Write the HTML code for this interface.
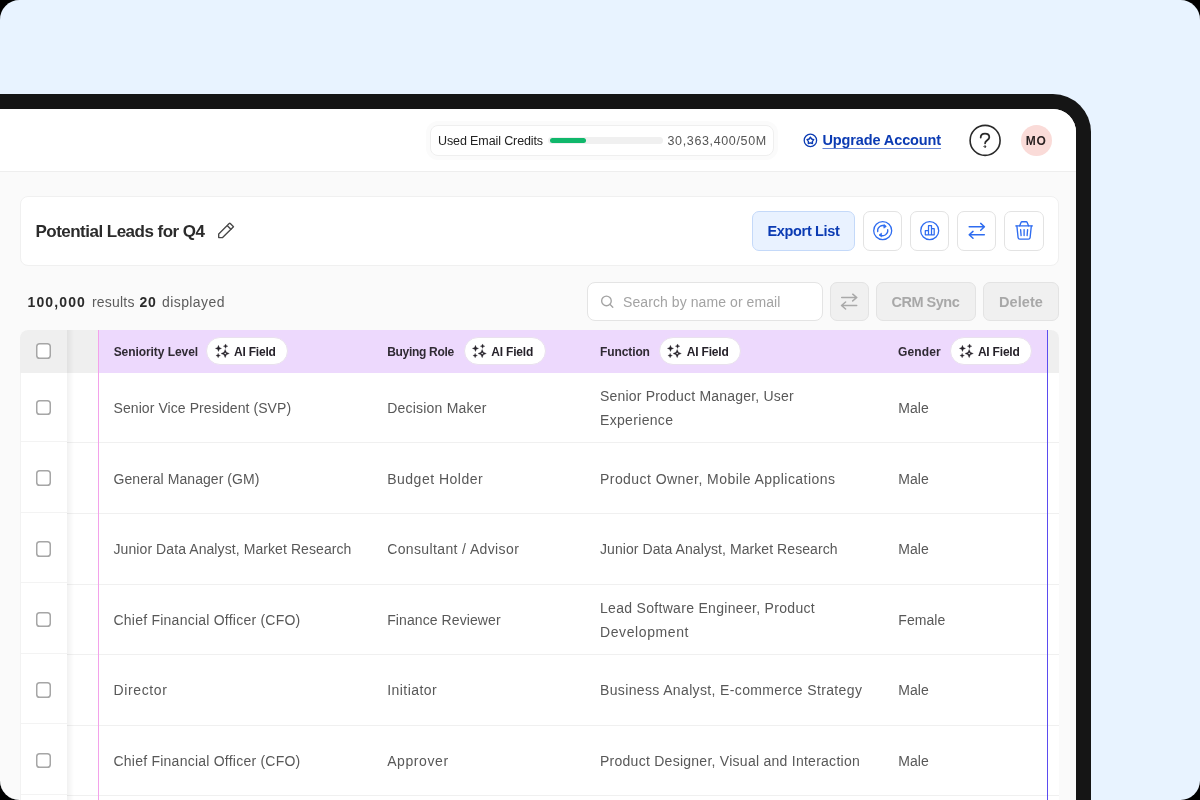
<!DOCTYPE html>
<html>
<head>
<meta charset="utf-8">
<title>Leads</title>
<style>
*{box-sizing:border-box;margin:0;padding:0}
html,body{width:1200px;height:800px;overflow:hidden;background:#000;font-family:"Liberation Sans",sans-serif;}
.canvas{will-change:transform;position:absolute;left:0;top:0;width:1200px;height:800px;background:#e8f3ff;border-radius:19.5px;overflow:hidden}
.frame{position:absolute;left:-60px;top:94px;width:1151px;height:800px;background:#151515;border-radius:38px}
.screen{position:absolute;left:0;top:109px;width:1076px;height:700px;background:#fafafa;border-top-right-radius:23px;overflow:hidden}
.abs{position:absolute}
.t{position:absolute;white-space:nowrap;line-height:1}
.b{font-weight:700}
/* header */
.hdr{position:absolute;left:0;top:0;width:1076px;height:62.5px;background:#fff;border-bottom:1px solid #eeeeee}
.credits{position:absolute;left:430px;top:16px;width:344px;height:30.6px;border:1px solid #efefef;border-radius:8px;background:#fff;box-shadow:0 0 0 4px #fbfbfb}
.bar{position:absolute;left:548px;top:27.7px;width:115.2px;height:7.5px;border-radius:4px;background:#f0f0f0}
.bar i{position:absolute;left:1.6px;top:1.5px;width:36.6px;height:4.5px;border-radius:2.5px;background:#10b76b}
.help{position:absolute;left:969.5px;top:16px;width:31px;height:31px;border-radius:50%;border:1.6px solid #242424}
.avatar{position:absolute;left:1020.5px;top:16px;width:31px;height:31px;border-radius:50%;background:#fadbd8}
/* cards */
.card{position:absolute;left:20px;top:87px;width:1039px;height:69.5px;background:#fff;border:1px solid #f0f0f0;border-radius:8px}
.btn{position:absolute;height:39px;border-radius:7px}
.ibtn{width:39.3px;height:39.5px;background:#fff;border:1px solid #e3e3e3}
.gbtn{background:#f0f0f0;border:1px solid #e3e3e3}
.btn svg{position:absolute;left:0;top:0}
.search{position:absolute;left:587px;top:173px;width:236px;height:39px;background:#fff;border:1px solid #e4e4e4;border-radius:8px}
/* table */
.table{position:absolute;left:20px;top:221px;width:1039px;height:500px;border-top-left-radius:8px;border-top-right-radius:8px;overflow:hidden;background:#fff}
.th{position:absolute;left:0;top:0;width:1039px;height:43px;background:#efefef}
.thp{position:absolute;left:79px;top:0;width:948px;height:43px;background:#edd9fd}
.row{position:absolute;left:0;width:1039px;height:70.67px;border-bottom:1px solid #f0f0f0}
.cb{position:absolute;left:15.6px;width:15.5px;height:15.5px;border-radius:3.6px;background:#fff;box-shadow:inset 0 0 0 1.5px #a6a6a6}
.pill{position:absolute;top:7px;height:28px;width:82px;border-radius:14px;background:#fff;border:1px solid #e9e1ee}
.hl{position:absolute;top:14.7px;font-size:12px;font-weight:700;color:#2f2a33;white-space:nowrap;line-height:15px}
.pill span{position:absolute;left:26.6px;top:7.2px;font-size:12px;font-weight:700;color:#26222a;white-space:nowrap;line-height:15px;letter-spacing:-0.2px}
.pill svg{position:absolute;left:6.3px;top:4.8px}
.c{position:absolute;font-size:14px;color:#585858;white-space:nowrap;line-height:24px}
.cs{position:absolute;left:0;bottom:-1px;width:46.6px;height:2.4px;background:#fff;border-top:1px solid #f3f3f3}
.tl{position:absolute;left:0;top:43px;width:1px;height:500px;background:#f2f2f2}
.stick{position:absolute;left:46.6px;top:0;width:32px;height:500px;background:linear-gradient(90deg,rgba(0,0,0,.055),rgba(0,0,0,0) 7px)}
.lline{position:absolute;left:78px;top:0;width:1px;height:500px;background:#f3a2ea}
.rline{position:absolute;left:1027px;top:0;width:1px;height:500px;background:#5b4cf0}
</style>
</head>
<body>
<div class="canvas">
  <div class="frame"></div>
  <div class="screen">
    <div class="hdr"></div>
    <div class="credits"></div>
    <div class="t" style="left:438px;top:26.3px;font-size:12.5px;color:#222;letter-spacing:-0.11px">Used Email Credits</div>
    <div class="bar"><i></i></div>
    <div class="t" style="left:667.5px;top:26.3px;font-size:12.5px;color:#555;letter-spacing:0.64px">30,363,400/50M</div>
    <div class="t b" style="left:822.5px;top:24.1px;font-size:14.5px;color:#0b3bb3;letter-spacing:-0.12px;text-decoration:underline;text-decoration-thickness:1px;text-underline-offset:3.2px;text-decoration-color:#6685d6">Upgrade Account</div>
    <div class="avatar"></div>
    <div class="t b" style="left:1025.8px;top:26.4px;font-size:12px;color:#2a2222;letter-spacing:0.7px">MO</div>

    <div class="card"></div>
    <div class="t b" style="left:35.5px;top:113.7px;font-size:17px;color:#2b2b2b;letter-spacing:-0.52px">Potential Leads for Q4</div>

    <div class="btn" style="left:752px;top:102px;height:39.5px;width:103px;background:#e9f2ff;border:1px solid #c4d9f9"></div>
    <div class="t b" style="left:767.5px;top:114.5px;font-size:14.5px;color:#0b3bb3;letter-spacing:-0.34px">Export List</div>
    <div class="btn ibtn" style="left:863px;top:102px"></div>
    <div class="btn ibtn" style="left:910.1px;top:102px"></div>
    <div class="btn ibtn" style="left:957.2px;top:102px"></div>
    <div class="btn ibtn" style="left:1004.3px;top:102px"></div>

    <div class="t" style="left:27.5px;top:185.7px;font-size:14px;color:#555"><span class="b" style="color:#2b2b2b;letter-spacing:1.13px">100,000</span></div>
    <div class="t" style="left:92px;top:185.7px;font-size:14px;color:#5c5c5c;letter-spacing:.2px">results</div>
    <div class="t b" style="left:139.5px;top:185.7px;font-size:14px;color:#2b2b2b;letter-spacing:.66px">20</div>
    <div class="t" style="left:162px;top:185.7px;font-size:14px;color:#5c5c5c;letter-spacing:.41px">displayed</div>

    <div class="search"></div>
    <div class="t" style="left:623px;top:185.5px;font-size:14px;color:#a3a3a3;letter-spacing:.08px">Search by name or email</div>
    <div class="btn gbtn" style="left:830px;top:173px;width:39px"></div>
    <div class="btn gbtn" style="left:876px;top:173px;width:100px"></div>
    <div class="t b" style="left:891.5px;top:185.7px;font-size:14.5px;color:#a8a8a8;letter-spacing:-0.5px">CRM Sync</div>
    <div class="btn gbtn" style="left:983px;top:173px;width:76px"></div>
    <div class="t b" style="left:999px;top:185.7px;font-size:14.5px;color:#a8a8a8;letter-spacing:.08px">Delete</div>

<svg class="abs" style="left:0;top:-109px" width="1200" height="800" viewBox="0 0 1200 800" fill="none" stroke-linecap="round" stroke-linejoin="round">
  <!-- upgrade icon -->
  <g stroke="#0b3bb3" stroke-width="1.3">
    <circle cx="810.4" cy="140.4" r="6.2"/>
    <path d="M810.40 137.20 L811.63 139.00 L813.73 139.62 L812.40 141.35 L812.46 143.53 L810.40 142.80 L808.34 143.53 L808.40 141.35 L807.07 139.62 L809.17 139.00Z" stroke-width="1.4"/>
  </g>
  <!-- help -->
  <g stroke="#2a2a2a" stroke-width="1.6">
    <circle cx="985.1" cy="140.4" r="15"/>
    <path d="M980.7 137.6 C980.7 135 982.6 133.7 985 133.7 C987.6 133.7 989.3 135.2 989.3 137.2 C989.3 140.2 985.1 140.3 985.1 143.3" stroke-width="1.8"/>
    <path d="M985.1 145.8 L986 146.7 L985.1 147.6 L984.2 146.7Z" fill="#2a2a2a" stroke-width="1"/>
  </g>
  <!-- pencil -->
  <g stroke="#484848" stroke-width="1.35">
    <path d="M230.3 223.5 L233.5 226.7 L222.6 237.6 L218.7 237.6 L218.7 233.9 L229.2 223.5 Q229.75 223 230.3 223.5Z"/>
    <path d="M227.6 225.9 L230.9 229.2"/>
  </g>
  <!-- toolbar icons -->
  <g stroke="#2e6cf0" stroke-width="1.3">
    <circle cx="882.7" cy="230.65" r="9"/>
    <path d="M877.7 231.6 A5.1 5.1 0 0 1 885.3 226.3"/>
    <path d="M884.2 224.7 L886.3 226.4 L884.2 227.9Z" fill="#2e6cf0" stroke-width=".8"/>
    <path d="M887.7 229.7 A5.1 5.1 0 0 1 880.1 235"/>
    <path d="M881.2 233.4 L879.1 235 L881.2 236.6Z" fill="#2e6cf0" stroke-width=".8"/>
    <circle cx="929.7" cy="230.65" r="9"/>
    <path d="M925.3 234.8 V230.5 H928.5 V225.7 H931.5 V228.7 H934.2 V234.8 Z M928.5 230.5 V234.8 M931.5 228.7 V234.8" stroke-width="1.25"/>
  </g>
  <g stroke="#2e6cf0" stroke-width="1.5">
    <path d="M969.2 226.8 H984.3 M980.7 223.4 L984.4 226.8 L980.7 230.2"/>
    <path d="M984.3 234.8 H969.3 M973 231.4 L969.2 234.8 L973 238.3"/>
  </g>
  <g stroke="#2e6cf0" stroke-width="1.35">
    <path d="M1015.8 225.9 H1032.4"/>
    <path d="M1019.6 225.9 L1021 222.4 Q1021.3 221.7 1022 221.7 H1026.2 Q1026.9 221.7 1027.2 222.4 L1028.6 225.9"/>
    <path d="M1016.9 226.1 L1018.1 237.6 Q1018.3 239.1 1019.8 239.1 H1028.4 Q1029.9 239.1 1030.1 237.6 L1031.3 226.1"/>
    <path d="M1020.6 229.6 L1021.1 235.6 M1024.1 229.6 V235.6 M1027.6 229.6 L1027.1 235.6"/>
  </g>
  <!-- search -->
  <g stroke="#a3a3a3" stroke-width="1.35">
    <circle cx="606.45" cy="300.9" r="4.8"/>
    <path d="M610.1 304.5 L612.8 307.2"/>
  </g>
  <!-- gray swap -->
  <g stroke="#a9a9a9" stroke-width="1.5">
    <path d="M841.7 297.5 H856.7 M852.7 294.2 L856.8 297.5 L852.7 300.9"/>
    <path d="M856.7 305.45 H841.7 M845.6 302 L841.5 305.45 L845.6 309"/>
  </g>
</svg>
    <div class="table" id="table">
<div class="row" style="top:42.70px"><div class="cb" style="top:27.2px"></div><div class="cs"></div>
<div class="c" style="left:93.5px;top:23.3px;letter-spacing:0.077px">Senior Vice President (SVP)</div>
<div class="c" style="left:367.2px;top:23.3px;letter-spacing:0.208px">Decision Maker</div>
<div class="c" style="left:580px;top:11.3px;letter-spacing:0.194px">Senior Product Manager, User</div>
<div class="c" style="left:580px;top:35.3px;letter-spacing:0.325px">Experience</div>
<div class="c" style="left:878.3px;top:23.3px;letter-spacing:0.010px">Male</div>
</div>
<div class="row" style="top:113.30px"><div class="cb" style="top:27.2px"></div><div class="cs"></div>
<div class="c" style="left:93.5px;top:23.3px;letter-spacing:0.064px">General Manager (GM)</div>
<div class="c" style="left:367.2px;top:23.3px;letter-spacing:0.499px">Budget Holder</div>
<div class="c" style="left:580px;top:23.3px;letter-spacing:0.446px">Product Owner, Mobile Applications</div>
<div class="c" style="left:878.3px;top:23.3px;letter-spacing:0.010px">Male</div>
</div>
<div class="row" style="top:183.90px"><div class="cb" style="top:27.2px"></div><div class="cs"></div>
<div class="c" style="left:93.5px;top:23.3px;letter-spacing:0.083px">Junior Data Analyst, Market Research</div>
<div class="c" style="left:367.2px;top:23.3px;letter-spacing:0.374px">Consultant / Advisor</div>
<div class="c" style="left:580px;top:23.3px;letter-spacing:0.072px">Junior Data Analyst, Market Research</div>
<div class="c" style="left:878.3px;top:23.3px;letter-spacing:0.010px">Male</div>
</div>
<div class="row" style="top:254.50px"><div class="cb" style="top:27.2px"></div><div class="cs"></div>
<div class="c" style="left:93.5px;top:23.3px;letter-spacing:0.233px">Chief Financial Officer (CFO)</div>
<div class="c" style="left:367.2px;top:23.3px;letter-spacing:0.090px">Finance Reviewer</div>
<div class="c" style="left:580px;top:11.3px;letter-spacing:0.307px">Lead Software Engineer, Product</div>
<div class="c" style="left:580px;top:35.3px;letter-spacing:0.591px">Development</div>
<div class="c" style="left:878.3px;top:23.3px;letter-spacing:0.052px">Female</div>
</div>
<div class="row" style="top:325.10px"><div class="cb" style="top:27.2px"></div><div class="cs"></div>
<div class="c" style="left:93.5px;top:23.3px;letter-spacing:0.623px">Director</div>
<div class="c" style="left:367.2px;top:23.3px;letter-spacing:0.453px">Initiator</div>
<div class="c" style="left:580px;top:23.3px;letter-spacing:0.359px">Business Analyst, E-commerce Strategy</div>
<div class="c" style="left:878.3px;top:23.3px;letter-spacing:0.010px">Male</div>
</div>
<div class="row" style="top:395.70px"><div class="cb" style="top:27.2px"></div><div class="cs"></div>
<div class="c" style="left:93.5px;top:23.3px;letter-spacing:0.233px">Chief Financial Officer (CFO)</div>
<div class="c" style="left:367.2px;top:23.3px;letter-spacing:0.586px">Approver</div>
<div class="c" style="left:580px;top:23.3px;letter-spacing:0.261px">Product Designer, Visual and Interaction</div>
<div class="c" style="left:878.3px;top:23.3px;letter-spacing:0.010px">Male</div>
</div>
<div class="th"></div>
      <div class="thp"></div>
      <div class="cb" style="top:13px"></div>
      <div class="hl" style="left:93.7px;letter-spacing:-0.07px">Seniority Level</div><div class="pill" style="left:186.4px"><svg width="17" height="17" viewBox="0 0 16 16" fill="#26222a" stroke="#26222a" stroke-width=".3" stroke-linejoin="round"><path d="M4.2 2.2 L5.05 4.25 L7.1 5.1 L5.05 5.95 L4.2 8 L3.35 5.95 L1.3 5.1 L3.35 4.25Z"/><path d="M10.9 0.9 L11.5 2.4 L13 3 L11.5 3.6 L10.9 5.1 L10.3 3.6 L8.8 3 L10.3 2.4Z"/><path d="M3.9 9.7 L4.5 11.2 L6 11.8 L4.5 12.4 L3.9 13.9 L3.3 12.4 L1.8 11.8 L3.3 11.2Z"/><path d="M10.5 6 L11.65 8.75 L14.4 9.9 L11.65 11.05 L10.5 13.8 L9.35 11.05 L6.6 9.9 L9.35 8.75Z M10.5 8.7 L10.05 9.45 L9.3 9.9 L10.05 10.35 L10.5 11.1 L10.95 10.35 L11.7 9.9 L10.95 9.45Z" fill-rule="evenodd"/></svg><span>AI Field</span></div>
      <div class="hl" style="left:367.2px;letter-spacing:-0.3px">Buying Role</div><div class="pill" style="left:443.7px"><svg width="17" height="17" viewBox="0 0 16 16" fill="#26222a" stroke="#26222a" stroke-width=".3" stroke-linejoin="round"><path d="M4.2 2.2 L5.05 4.25 L7.1 5.1 L5.05 5.95 L4.2 8 L3.35 5.95 L1.3 5.1 L3.35 4.25Z"/><path d="M10.9 0.9 L11.5 2.4 L13 3 L11.5 3.6 L10.9 5.1 L10.3 3.6 L8.8 3 L10.3 2.4Z"/><path d="M3.9 9.7 L4.5 11.2 L6 11.8 L4.5 12.4 L3.9 13.9 L3.3 12.4 L1.8 11.8 L3.3 11.2Z"/><path d="M10.5 6 L11.65 8.75 L14.4 9.9 L11.65 11.05 L10.5 13.8 L9.35 11.05 L6.6 9.9 L9.35 8.75Z M10.5 8.7 L10.05 9.45 L9.3 9.9 L10.05 10.35 L10.5 11.1 L10.95 10.35 L11.7 9.9 L10.95 9.45Z" fill-rule="evenodd"/></svg><span>AI Field</span></div>
      <div class="hl" style="left:580px;letter-spacing:-0.1px">Function</div><div class="pill" style="left:639.2px"><svg width="17" height="17" viewBox="0 0 16 16" fill="#26222a" stroke="#26222a" stroke-width=".3" stroke-linejoin="round"><path d="M4.2 2.2 L5.05 4.25 L7.1 5.1 L5.05 5.95 L4.2 8 L3.35 5.95 L1.3 5.1 L3.35 4.25Z"/><path d="M10.9 0.9 L11.5 2.4 L13 3 L11.5 3.6 L10.9 5.1 L10.3 3.6 L8.8 3 L10.3 2.4Z"/><path d="M3.9 9.7 L4.5 11.2 L6 11.8 L4.5 12.4 L3.9 13.9 L3.3 12.4 L1.8 11.8 L3.3 11.2Z"/><path d="M10.5 6 L11.65 8.75 L14.4 9.9 L11.65 11.05 L10.5 13.8 L9.35 11.05 L6.6 9.9 L9.35 8.75Z M10.5 8.7 L10.05 9.45 L9.3 9.9 L10.05 10.35 L10.5 11.1 L10.95 10.35 L11.7 9.9 L10.95 9.45Z" fill-rule="evenodd"/></svg><span>AI Field</span></div>
      <div class="hl" style="left:878px;letter-spacing:0.15px">Gender</div><div class="pill" style="left:930.3px"><svg width="17" height="17" viewBox="0 0 16 16" fill="#26222a" stroke="#26222a" stroke-width=".3" stroke-linejoin="round"><path d="M4.2 2.2 L5.05 4.25 L7.1 5.1 L5.05 5.95 L4.2 8 L3.35 5.95 L1.3 5.1 L3.35 4.25Z"/><path d="M10.9 0.9 L11.5 2.4 L13 3 L11.5 3.6 L10.9 5.1 L10.3 3.6 L8.8 3 L10.3 2.4Z"/><path d="M3.9 9.7 L4.5 11.2 L6 11.8 L4.5 12.4 L3.9 13.9 L3.3 12.4 L1.8 11.8 L3.3 11.2Z"/><path d="M10.5 6 L11.65 8.75 L14.4 9.9 L11.65 11.05 L10.5 13.8 L9.35 11.05 L6.6 9.9 L9.35 8.75Z M10.5 8.7 L10.05 9.45 L9.3 9.9 L10.05 10.35 L10.5 11.1 L10.95 10.35 L11.7 9.9 L10.95 9.45Z" fill-rule="evenodd"/></svg><span>AI Field</span></div>
      <div class="tl"></div>
      <div class="stick"></div>
      <div class="lline"></div>
      <div class="rline"></div>
    </div>
  </div>
</div>
</body>
</html>
